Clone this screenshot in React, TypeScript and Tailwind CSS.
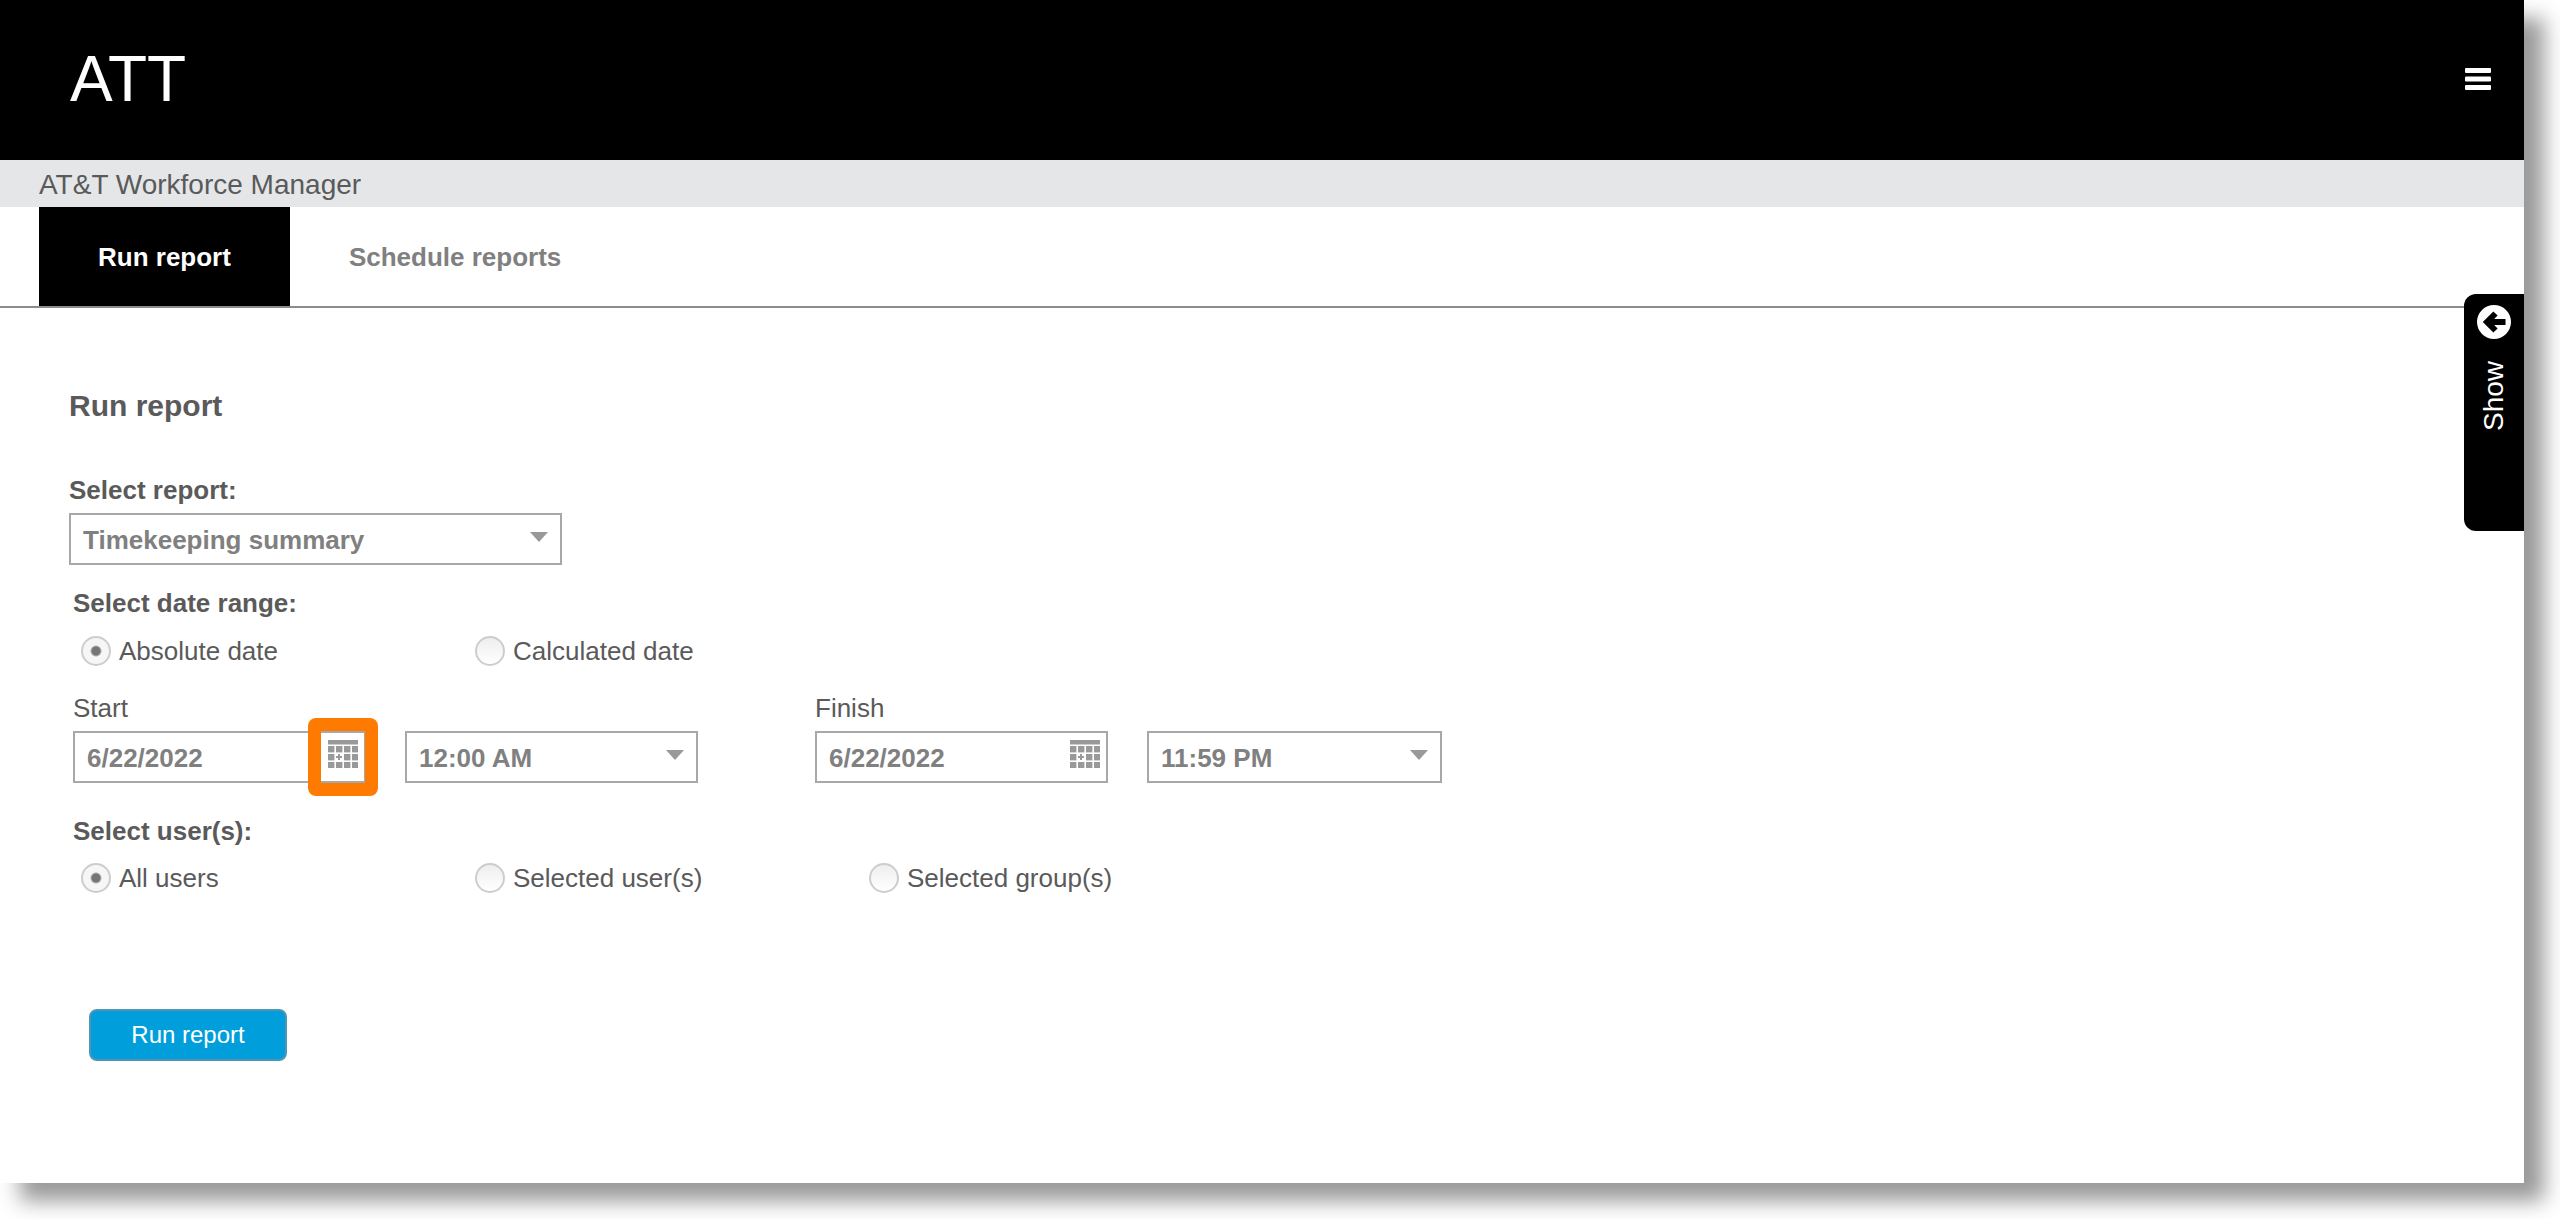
import { useState } from 'react'

interface RadioOptionProps {
  name: string
  value: string
  label: string
  selected: string
  onSelect: (value: string) => void
}

interface SelectBoxProps {
  id: string
  label?: string
  options: string[]
  className?: string
}

interface DateBoxProps {
  id: string
  highlighted?: boolean
}

const REPORTS = ['Timekeeping summary', 'Timekeeping detail', 'Mileage summary']
const START_TIMES = ['12:00 AM', '6:00 AM', '12:00 PM']
const FINISH_TIMES = ['11:59 PM', '6:00 PM', '12:00 PM']

function CalendarIcon() {
  const columns = [0, 8, 16, 24]
  const rows = [6, 14, 22]
  return (
    <svg width="30" height="28" viewBox="0 0 30 28" fill="#999" aria-hidden="true">
      <rect x="0" y="0" width="30" height="4.500" />
      {rows.map((y, r) =>
        columns.map((x, c) =>
          r === 1 && c === 1 ? (
            <path key={`${x}-${y}`} d="M10 14h2v2h2v2h-2v2h-2v-2H8v-2h2z" />
          ) : (
            <rect key={`${x}-${y}`} x={x} y={y} width="6.400" height="6.400" />
          )
        )
      )}
    </svg>
  )
}

function SelectBox({ id, label, options, className = '' }: SelectBoxProps) {
  return (
    <div className={`relative ${className}`}>
      <select
        id={id}
        aria-label={label}
        className="block h-[52px] w-full appearance-none border-2 border-[#a8a8a8] bg-white pl-3 pr-12 pt-0.5 text-[26px] font-bold text-[#808080]"
      >
        {options.map((option) => (
          <option key={option}>{option}</option>
        ))}
      </select>
      <svg
        className="pointer-events-none absolute right-3.5 top-[19px]"
        width="18"
        height="10"
        viewBox="0 0 18 10"
        fill="#999"
        aria-hidden="true"
      >
        <path d="M0 0h18L9 10z" />
      </svg>
    </div>
  )
}

function DateBox({ id, highlighted }: DateBoxProps) {
  const [value, setValue] = useState('6/22/2022')
  return (
    <div className="flex h-[52px] w-[293px] border-2 border-[#a8a8a8] bg-white">
      <input
        id={id}
        type="text"
        value={value}
        onChange={(e) => setValue(e.target.value)}
        className="min-w-0 flex-1 pl-3 pt-0.5 text-[26px] font-bold text-[#808080] outline-none"
      />
      <button type="button" aria-label="Open calendar" className="relative flex w-[42px] justify-center pt-[7px]">
        <CalendarIcon />
        {highlighted && (
          <span className="absolute -inset-x-3.5 -inset-y-[15px] rounded-lg border-[13px] border-[#ff7a00]" />
        )}
      </button>
    </div>
  )
}

function RadioOption({ name, value, label, selected, onSelect }: RadioOptionProps) {
  return (
    <label className="flex items-center gap-2 text-[26px] leading-[30px] text-[#5a5a5a]">
      <input
        type="radio"
        name={name}
        value={value}
        checked={selected === value}
        onChange={() => onSelect(value)}
        className="size-[30px] appearance-none rounded-full border-2 border-[#cdcdcd] bg-linear-to-b from-[#eeeeee] to-white checked:bg-[radial-gradient(circle,#757575_4px,#f6f6f6_6px)]"
      />
      {label}
    </label>
  )
}

export default function App() {
  const [dateMode, setDateMode] = useState('absolute')
  const [users, setUsers] = useState('all')

  return (
    <div className="overflow-hidden bg-white pb-9 pr-9 font-['Liberation_Sans',Arial,sans-serif]">
      <div className="relative bg-white shadow-[20px_18px_20px_#999]">
        <header className="flex h-40 items-center justify-between bg-black pb-0.5 pl-[70px] pr-8">
          <h1 className="text-[64px] leading-none text-white">ATT</h1>
          <button type="button" aria-label="Menu">
            <svg width="28" height="24" viewBox="0 0 28 24" fill="#fff" aria-hidden="true">
              <rect x="1" y="1" width="26" height="5" rx="1" />
              <rect x="1" y="9.500" width="26" height="5" rx="1" />
              <rect x="1" y="18" width="26" height="5" rx="1" />
            </svg>
          </button>
        </header>

        <div className="flex h-[47px] items-center bg-[#e4e6e8] pl-[39px] pt-0.5 text-[28px] text-[#5a5a5a]">
          AT&amp;T Workforce Manager
        </div>

        {/* Tabs */}
        <nav className="flex h-[101px] border-b-2 border-[#8c8c8c] pl-[39px] text-[26px] font-bold">
          <a href="#run" className="flex items-center bg-black px-[59px] pt-0.5 text-white">
            Run report
          </a>
          <a href="#schedule" className="flex items-center px-[59px] pt-0.5 text-[#808080]">
            Schedule reports
          </a>
        </nav>

        <main className="px-[69px] pb-[122px] pt-[78px] text-[26px] leading-8 text-[#5a5a5a]">
          <h2 className="text-[30px] font-bold leading-10">Run report</h2>

          <label htmlFor="report" className="mt-12 block font-bold">
            Select report:
          </label>
          <SelectBox id="report" options={REPORTS} className="mt-[7px] w-[493px]" />

          <div className="pl-1">
            {/* Date range */}
            <h3 id="range-label" className="mt-[22px] font-bold">
              Select date range:
            </h3>
            <div role="radiogroup" aria-labelledby="range-label" className="mt-[17px] grid grid-cols-[repeat(3,394px)] pl-2">
              <RadioOption name="range" value="absolute" label="Absolute date" selected={dateMode} onSelect={setDateMode} />
              <RadioOption name="range" value="calculated" label="Calculated date" selected={dateMode} onSelect={setDateMode} />
            </div>

            <div className="mt-[26px] flex gap-[117px]">
              <div>
                <label htmlFor="start-date">Start</label>
                <div className="mt-[7px] flex gap-[39px]">
                  <DateBox id="start-date" highlighted />
                  <SelectBox id="start-time" label="Start time" options={START_TIMES} className="w-[293px]" />
                </div>
              </div>
              <div>
                <label htmlFor="finish-date">Finish</label>
                <div className="mt-[7px] flex gap-[39px]">
                  <DateBox id="finish-date" />
                  <SelectBox id="finish-time" label="Finish time" options={FINISH_TIMES} className="w-[295px]" />
                </div>
              </div>
            </div>

            {/* Users */}
            <h3 id="users-label" className="mt-8 font-bold">
              Select user(s):
            </h3>
            <div role="radiogroup" aria-labelledby="users-label" className="mt-4 grid grid-cols-[repeat(3,394px)] pl-2">
              <RadioOption name="users" value="all" label="All users" selected={users} onSelect={setUsers} />
              <RadioOption name="users" value="selected" label="Selected user(s)" selected={users} onSelect={setUsers} />
              <RadioOption name="users" value="groups" label="Selected group(s)" selected={users} onSelect={setUsers} />
            </div>

            <button
              type="button"
              className="ml-4 mt-[116px] flex h-[52px] w-[198px] items-center justify-center rounded-lg border-2 border-[#4f95b5] bg-[#009fdb] text-[24px] text-white"
            >
              Run report
            </button>
          </div>
        </main>

        {/* Side drawer handle, sits over the tab line */}
        <button
          type="button"
          className="absolute right-0 top-[294px] flex h-[237px] w-[60px] flex-col items-center gap-[22px] rounded-l-xl bg-black pt-[11px] text-white"
        >
          <svg width="34" height="34" viewBox="0 0 34 34" aria-hidden="true">
            <circle cx="17" cy="17" r="17" fill="#fff" />
            <path d="M18.500 8.500L10 17l8.500 8.500M11 17h17.500" fill="none" stroke="#000" strokeWidth="6" />
          </svg>
          <span className="rotate-180 text-[28px] leading-8 [writing-mode:vertical-rl]">Show</span>
        </button>
      </div>
    </div>
  )
}
